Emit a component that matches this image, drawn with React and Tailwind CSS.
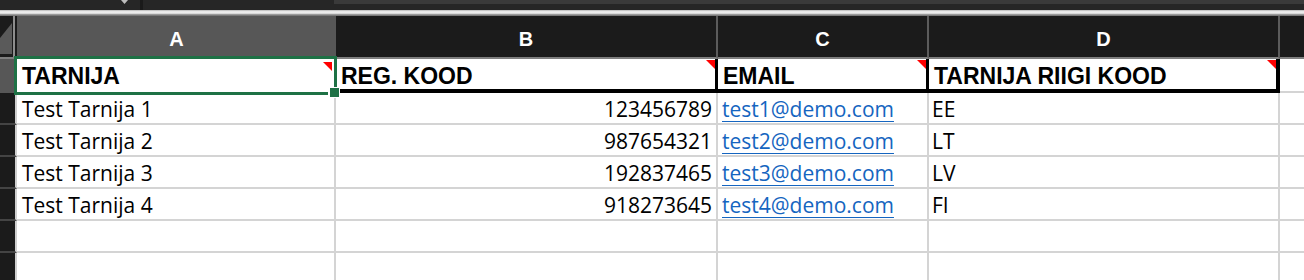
const columns = ["A", "B", "C", "D"];

const headers = ["TARNIJA", "REG. KOOD", "EMAIL", "TARNIJA RIIGI KOOD"];

const suppliers = [
  { name: "Test Tarnija 1", code: "123456789", email: "test1@demo.com", country: "EE" },
  { name: "Test Tarnija 2", code: "987654321", email: "test2@demo.com", country: "LT" },
  { name: "Test Tarnija 3", code: "192837465", email: "test3@demo.com", country: "LV" },
  { name: "Test Tarnija 4", code: "918273645", email: "test4@demo.com", country: "FI" },
  null,
  null,
];

const CommentMark = () => (
  <div className="absolute top-[1px] right-0 w-[9px] h-[9px] bg-[#ff0000] [clip-path:polygon(0_0,100%_0,100%_100%)]" />
);

const TopBar = () => (
  <div className="h-[16px] flex flex-col">
    <div className="h-[10px] flex bg-[#262626]">
      <div className="w-[140px] flex justify-end pr-[12px]">
        <svg width="7" height="4" viewBox="0 0 7 4">
          <polygon points="0,0 7,0 3.5,4" fill="#bdbdbd" />
        </svg>
      </div>
      <div className="w-[3px] bg-[#1a1a1a]" />
      <div className="w-[191px]" />
      <div className="flex-1">
        <div className="h-[4px] bg-[#3a3a3a]" />
      </div>
    </div>
    <div className="h-[6px] bg-[linear-gradient(#b5b5b5,#f2f2f2_30%,#e4e4e4_55%,#9a9a9a_75%,#6a6a6a)]" />
  </div>
);

export default function App() {
  return (
    <div className="w-[1304px] h-[280px] overflow-hidden bg-white relative font-['Open_Sans',sans-serif]">
      <TopBar />

      <div className="grid grid-cols-[17px_319px_382px_211px_351px_24px] grid-rows-[43px_34px_repeat(6,32px)]">
        {/* column header row */}
        <div className="bg-[#1b1b1b] border-b-2 border-[#7f7f7f] flex">
          <svg width="13" height="41" className="shrink-0">
            <polygon points="0,22 12,7 12,38 0,38" fill="#5a5a5a" />
          </svg>
          <div className="w-[2px] h-full bg-[#8d8d8d]" />
          <div className="w-[2px] h-full bg-[#1b1b1b]" />
        </div>
        {columns.map((col, i) => (
          <div
            key={col}
            className={
              "border-b-2 border-b-[#7f7f7f] text-center pt-[13px] text-[20px] leading-none font-bold text-white font-['Liberation_Sans',sans-serif] " +
              (i === 0 ? "bg-[#575757]" : "bg-[#1b1b1b] border-r-2 border-r-[#5c5c5c]")
            }
          >
            {col}
          </div>
        ))}
        <div className="bg-[#1b1b1b] border-b-2 border-b-[#7f7f7f]" />

        {/* header row with comment marks */}
        <div className="bg-[#575757] border-r-2 border-[#cfcfcf]" />
        {headers.map((text, i) => (
          <div
            key={text}
            className={
              "relative bg-white px-[5px] text-[23px] leading-[34px] font-bold text-black whitespace-nowrap font-['Liberation_Sans',sans-serif] " +
              (i === 0
                ? "pr-[4px]"
                : i === 3
                ? "border-r-4 border-b-4 border-black leading-[30px]"
                : "border-r-[3px] border-b-4 border-black leading-[30px]")
            }
          >
            {text}
            {i === 0 ? (
              <div className="absolute top-[3px] right-[4px] w-[9px] h-[9px] bg-[#ff0000] [clip-path:polygon(0_0,100%_0,100%_100%)]" />
            ) : (
              <CommentMark />
            )}
          </div>
        ))}
        <div className="border-b-2 border-[#d4d4d4]" />

        {/* data rows */}
        {suppliers.map((row, r) => (
          <div key={r} className="contents">
            <div className="bg-[#1b1b1b] border-b-2 border-b-[#444444] border-r-2 border-r-[#cfcfcf]" />
            <div className="border-r-2 border-b-2 border-[#d4d4d4] pl-[5px] text-[21px] leading-[32px] text-black whitespace-nowrap">
              {row?.name}
            </div>
            <div className="border-r-2 border-b-2 border-[#d4d4d4] pr-[4px] text-right text-[21px] leading-[32px] text-black whitespace-nowrap">
              {row?.code}
            </div>
            <div className="border-r-2 border-b-2 border-[#d4d4d4] pl-[4px] text-[21px] leading-[32px] whitespace-nowrap">
              {row && (
                <span className="text-[#1565c0] underline decoration-1 underline-offset-[4px]">{row.email}</span>
              )}
            </div>
            <div className="border-r-2 border-b-2 border-[#d4d4d4] pl-[3px] text-[21px] leading-[32px] text-black whitespace-nowrap">
              {row?.country}
            </div>
            <div className="border-b-2 border-[#d4d4d4]" />
          </div>
        ))}
      </div>

      {/* active cell frame on A1 with fill handle */}
      <div className="absolute left-[14px] top-[56px] w-[323px] h-[39px] pointer-events-none">
        <div className="absolute left-0 top-0 w-full h-[3px] bg-[#1e7145]" />
        <div className="absolute left-0 top-0 w-[3px] h-full bg-[#1e7145]" />
        <div className="absolute left-0 bottom-0 w-[314px] h-[3px] bg-[#1e7145]" />
        <div className="absolute right-0 top-0 w-[3px] h-[31px] bg-[#1e7145]" />
        <div className="absolute right-[-2px] bottom-[-2px] w-[9px] h-[9px] bg-[#1e7145] outline outline-1 outline-white" />
      </div>
    </div>
  );
}
